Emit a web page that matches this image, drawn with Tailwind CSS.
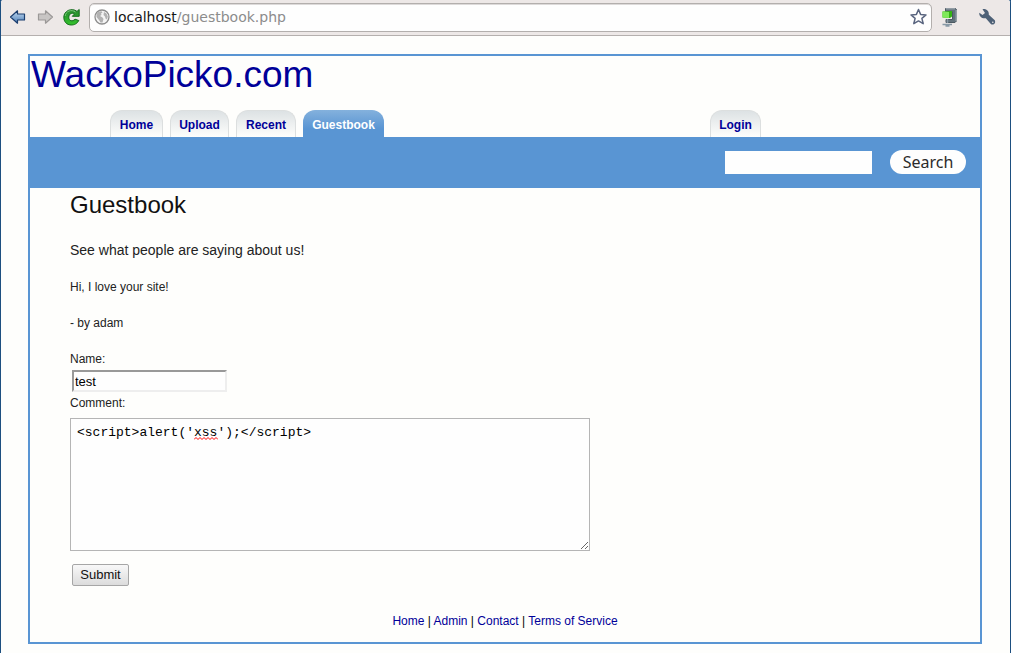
<!DOCTYPE html>
<html lang="en">
<head>
<meta charset="utf-8">
<meta name="viewport" content="width=device-width, initial-scale=1">
<title>WackoPicko.com - Guestbook</title>
<script src="https://cdn.jsdelivr.net/npm/@tailwindcss/browser@4"></script>
</head>
<body class="min-h-screen bg-[#1d4f80] font-['Liberation_Sans',Arial,sans-serif] text-xs text-[#222]">
<div class="flex min-h-screen flex-col overflow-hidden rounded-t-[3px] border-x border-[#1d4f80] bg-[#fefefc]">

  <!-- Browser toolbar -->
  <header class="flex h-9 items-center border-b border-[#b5b0ae] bg-[#ede8e7] pr-3.5 pb-0.5 pl-2">
    <button type="button" aria-label="Back" class="mr-2.5 h-4 w-[18px]">
      <svg class="block" width="18" height="16" viewBox="0 0 18 16"><defs><linearGradient id="b" x2="0" y2="1"><stop stop-color="#c4dcf2"/><stop offset="1" stop-color="#4f80b8"/></linearGradient></defs><path d="M1.500 8 8.500 1.800V5H15.500V11H8.500V14.200Z" fill="url(#b)" stroke="#1d3f70" stroke-width="1.200" stroke-linejoin="round"/></svg>
    </button>
    <button type="button" aria-label="Forward" class="mr-2 h-4 w-[18px]">
      <svg class="block" width="18" height="16" viewBox="0 0 18 16"><path d="M15.500 8 8.500 1.800V5H1.500V11H8.500V14.200Z" fill="#c8c5c4" stroke="#9b9897" stroke-width="1.200" stroke-linejoin="round"/></svg>
    </button>
    <button type="button" aria-label="Reload" class="mr-[9px] h-[18px] w-[17px]">
      <svg class="block" width="17" height="18" viewBox="0 0 17 18"><defs><linearGradient id="g" x2="0" y2="1"><stop stop-color="#2a8c31"/><stop offset=".5" stop-color="#2ba22d"/><stop offset="1" stop-color="#35c42c"/></linearGradient></defs><path d="M16.200 1.500V8.300H9.300L11.500 6C9.500 4.300 5.800 5.500 5.800 9.200 5.800 13 9.500 14 12 11.200L15.800 12.500C14 16 11 17 8.300 17 3.500 17 .800 13.500 .800 9.200.800 3 8.500-.800 14 3.400Z" fill="url(#g)" stroke="#146b1b"/><path d="M2.200 8C2.800 3 8.500 1 12.500 4" fill="none" stroke="#79c779"/></svg>
    </button>
    <div class="mt-px flex h-[29px] flex-1 items-center rounded-[5px] border border-[#b3afad] bg-[#fefefe] pr-1 pl-1 shadow-[inset_0_1px_0_#dddada]">
      <svg class="mr-1 shrink-0" width="16" height="16" viewBox="0 0 16 16"><circle cx="8" cy="8" r="7" fill="#f4f4f4" stroke="#8d8d8d" stroke-width="1.300"/><path d="M2.500 5 4.500 2.800 7.500 2.300 8.500 3.500 7 4.500 7.500 6 6 7 8.500 8.500 9.500 10 8.500 13.500 6.500 13.500 5 11 2.500 8ZM10 3 12.500 4.500 13.800 7.500 13 10.500 11.500 9.500 11 7.500 9.500 6Z" fill="#b2b2b2"/></svg>
      <div class="flex-1 font-['DejaVu_Sans',sans-serif] text-sm leading-5 text-[#8c8c8c]"><span class="text-[#161616]">localhost</span>/guestbook.php</div>
      <button type="button" aria-label="Bookmark this page" class="size-[18px]">
        <svg class="block" width="18" height="18" viewBox="0 0 18 18"><path d="M9.500 1.500 11.600 6.400 17 6.900 12.900 10.400 14.200 15.700 9.500 12.900 4.800 15.700 6.100 10.400 2 6.900 7.400 6.400Z" fill="#fff" stroke="#5b6680" stroke-width="1.500" stroke-linejoin="round"/></svg>
      </button>
    </div>
    <button type="button" aria-label="Download extension" class="mr-5 ml-[9px] h-5 w-[17px]">
      <svg class="block" width="17" height="20" viewBox="0 0 17 20"><path d="M4.500 1.500H14.500L15.500 2.500V14L14 15.500H5V12.500H11.500V4.500H4.500Z" fill="#62717b" stroke="#4c5962"/><path d="M5 1.800H14M15.200 3V14" stroke="#b4bdc3" fill="none"/><path d="M1.500 4.500 11 4V9.500L9 11 1.500 10.500Z" fill="#35b414"/><path d="M1.500 4.500 8 5V11L1.500 10.500Z" fill="#7fe85a"/><path d="M6.500 12V16M1.500 17.500H11M4.500 19H8.500" stroke="#8798a5" stroke-width="1.500" fill="none"/></svg>
    </button>
    <button type="button" aria-label="Settings" class="h-[18px] w-[18px]">
      <svg class="block" width="18" height="18" viewBox="0 0 18 18"><path d="M4.500 1.200C8.500 .500 11.300 3.300 10.800 6.800L16.800 12.200C18 15 16 17.300 13 16.200L7.800 10.200C4.500 11 .800 8.500 1.300 4.800L4.500 7 7 5Z" fill="#4e6177"/><circle cx="14.800" cy="14.300" r=".8" fill="#ede8e7"/></svg>
    </button>
  </header>

  <!-- Page -->
  <main class="mt-[18px] mr-7 mb-[9px] ml-[27px] flex-1 border-2 border-[#5995d3]">
    <h1 class="pl-px text-[37px] leading-[38px]"><a href="#" class="text-[#000099]">WackoPicko.com</a></h1>

    <nav class="mt-4 flex h-[27px] pl-20 text-xs leading-7 font-bold text-[#000099]">
      <div class="flex w-[600px] gap-[7px]">
        <a href="#" class="h-[27px] w-[53px] rounded-t-xl border border-b-0 border-[#dcdfdf] bg-linear-to-b from-[#dde2e4] to-[#fefefc] text-center">Home</a>
        <a href="#" class="h-[27px] w-[59px] rounded-t-xl border border-b-0 border-[#dcdfdf] bg-linear-to-b from-[#dde2e4] to-[#fefefc] text-center">Upload</a>
        <a href="#" class="h-[27px] w-[60px] rounded-t-xl border border-b-0 border-[#dcdfdf] bg-linear-to-b from-[#dde2e4] to-[#fefefc] text-center">Recent</a>
        <a href="#" aria-current="page" class="h-[27px] w-[81px] rounded-t-xl bg-linear-to-b from-[#84b1dd] to-[#5995d3] to-70% pt-px text-center text-white">Guestbook</a>
      </div>
      <a href="#" class="h-[27px] w-[51px] rounded-t-xl border border-b-0 border-[#dcdfdf] bg-linear-to-b from-[#dde2e4] to-[#fefefc] text-center">Login</a>
    </nav>

    <form class="flex h-[51px] items-start justify-end gap-[18px] bg-[#5995d3] pt-[13px] pr-3.5">
      <input type="text" aria-label="Search" class="mt-px h-[23px] w-[147px] bg-[#fefefe] px-1">
      <button type="button" class="h-6 w-[76px] rounded-full bg-[#fefefe] font-['Noto_Sans',sans-serif] text-base leading-6 text-[#2b2b2b]">Search</button>
    </form>

    <section class="px-10">
      <h2 class="pt-px text-2xl leading-8 text-[#111]">Guestbook</h2>
      <p class="mt-5 text-sm leading-[18px]">See what people are saying about us!</p>
      <p class="mt-[19px] leading-[18px]">Hi, I love your site!</p>
      <p class="mt-[18px] leading-[18px]">- by adam</p>

      <form class="mt-[18px]">
        <label for="name" class="block leading-[18px]">Name:</label>
        <input id="name" type="text" value="test" class="mt-0.5 ml-0.5 block h-[22px] w-[155px] border-2 border-t-[#999] border-r-[#eee] border-b-[#eee] border-l-[#999] bg-[#fefefe] px-px text-[13px] text-black">
        <label for="comment" class="mt-0.5 block leading-[18px]">Comment:</label>
        <div class="relative mt-1.5 max-w-[520px]">
          <textarea id="comment" spellcheck="false" class="block h-[133px] w-full border border-[#b5b5b5] bg-[#fefefe] px-1.5 py-[5px] font-['Liberation_Mono',monospace] text-[13px] leading-[18px] text-black">&lt;script&gt;alert('xss');&lt;/script&gt;</textarea>
          <svg class="pointer-events-none absolute top-[19px] left-[124px]" width="24" height="3" viewBox="0 0 24 3"><path d="M0 2.500 2 .500 4 2.500 6 .500 8 2.500 10 .500 12 2.500 14 .500 16 2.500 18 .500 20 2.500 22 .500 24 2.500" fill="none" stroke="#f00"/></svg>
        </div>
        <button type="button" class="mt-[13px] ml-0.5 block h-[22px] w-[57px] rounded-[2px] border border-[#a6a6a6] bg-linear-to-b from-[#f8f8f8] to-[#dcdcdc] text-[13px] text-[#111]">Submit</button>
      </form>
    </section>

    <footer class="mt-[26px] pb-3 text-center leading-[18px] text-black">
      <a href="#" class="text-[#000099]">Home</a> |
      <a href="#" class="text-[#000099]">Admin</a> |
      <a href="#" class="text-[#000099]">Contact</a> |
      <a href="#" class="text-[#000099]">Terms of Service</a>
    </footer>
  </main>
</div>
</body>
</html>
